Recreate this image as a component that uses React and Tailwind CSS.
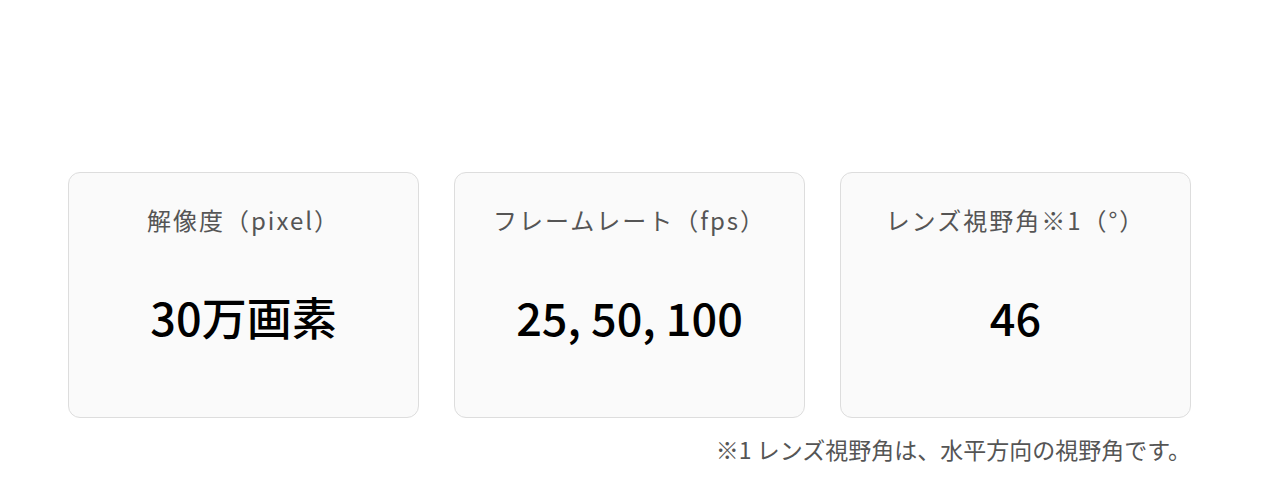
const specs = [
  { label: "解像度（pixel）", value: "30万画素" },
  { label: "フレームレート（fps）", value: "25, 50, 100" },
  { label: "レンズ視野角※1（°）", value: "46" },
];

function SpecCard({ label, value }) {
  return (
    <div className="h-[246px] rounded-xl border border-[#dddddd] bg-[#fafafa] flex flex-col items-center">
      <p className="mt-[31px] text-[24px] leading-[32px] tracking-[2px] text-[#555555]">
        {label}
      </p>
      <p className="mt-[53px] text-[45px] leading-[56px] font-medium text-black">
        {value}
      </p>
    </div>
  );
}

export default function App() {
  return (
    <div
      className="min-h-[500px] bg-white pt-[172px]"
      style={{ fontFamily: '"Noto Sans CJK JP", "Noto Sans", sans-serif' }}
    >
      <div className="ml-[68px] w-[1123px]">
        <div className="grid grid-cols-3 gap-[35px]">
          {specs.map((s) => (
            <SpecCard key={s.label} label={s.label} value={s.value} />
          ))}
        </div>
        <p className="mt-[15px] text-right text-[23px] leading-[32px] text-[#555555]">
          ※1 レンズ視野角は、水平方向の視野角です。
        </p>
      </div>
    </div>
  );
}
